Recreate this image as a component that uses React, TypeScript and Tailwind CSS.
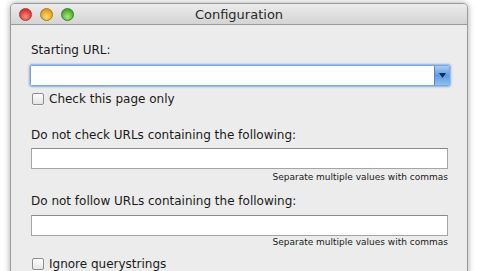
import React from "react";

function Checkbox({ label }: { label: string }) {
  return (
    <div className="flex items-center gap-[5px]">
      <div className="w-[12px] h-[12px] rounded-[2px] border border-[#8e8e8e] bg-gradient-to-b from-[#ffffff] to-[#e4e4e4] shadow-[0_1px_0_rgba(255,255,255,0.6)]" />
      <span className="text-[12px] text-[#1a1a1a] leading-none">{label}</span>
    </div>
  );
}

export default function App() {
  return (
    <div
      className="w-[480px] h-[271px] bg-white overflow-hidden pl-[10px] pr-[12px] pt-[3px]"
      style={{ fontFamily: '"Lucida Grande", "DejaVu Sans", "Liberation Sans", sans-serif' }}
    >
      <div className="h-[300px] rounded-t-[5px] border border-[#9a9a9a] bg-[#ececec] shadow-[0_0_6px_rgba(0,0,0,0.35)] overflow-hidden">
        <div className="relative h-[21px] flex items-center justify-center bg-gradient-to-b from-[#ececec] to-[#d4d4d4] border-b border-[#9a9a9a]">
          <div className="absolute left-[8px] top-[4px] flex gap-[8px]">
            <div className="w-[13px] h-[13px] rounded-full border border-[#9b3b3b] bg-[radial-gradient(circle_at_50%_70%,#ff8c86,#d8342d_70%)]" />
            <div className="w-[13px] h-[13px] rounded-full border border-[#a97a1f] bg-[radial-gradient(circle_at_50%_70%,#ffdd6e,#e19d1a_70%)]" />
            <div className="w-[13px] h-[13px] rounded-full border border-[#3c7d2a] bg-[radial-gradient(circle_at_50%_70%,#a6ec7d,#4aa72c_70%)]" />
          </div>
          <span className="text-[13px] text-[#2a2a2a] leading-none">Configuration</span>
        </div>
        <div className="pl-[19px] pr-[17px] pt-[19px] flex flex-col">
          <span className="text-[12px] text-[#1a1a1a] leading-none pl-[1px]">Starting URL:</span>
          <div className="mt-[9px] h-[21px] flex border border-[#7ea7d8] rounded-[2px] shadow-[0_0_2px_1px_rgba(110,160,220,0.8)]">
            <div className="flex-1 bg-white" />
            <div className="w-[15px] flex items-center justify-center bg-gradient-to-b from-[#a9cdf5] via-[#5c9ae4] to-[#8cc0f4] border-l border-[#5a86c0]">
              <svg width="7" height="5" viewBox="0 0 7 5">
                <path d="M0 0 L7 0 L3.5 5 Z" fill="#1a2a44" />
              </svg>
            </div>
          </div>
          <div className="mt-[7px] pl-[2px]">
            <Checkbox label="Check this page only" />
          </div>
          <span className="mt-[24px] text-[12px] text-[#1a1a1a] leading-none pl-[1px]">Do not check URLs containing the following:</span>
          <div className="mt-[7px] ml-[1px] mr-[2px] h-[21px] bg-white border border-[#a5a5a5] border-t-[#8a8a8a]" />
          <span className="mt-[4px] self-end text-[9px] text-[#1a1a1a] leading-none pr-[2px]">Separate multiple values with commas</span>
          <span className="mt-[13px] text-[12px] text-[#1a1a1a] leading-none pl-[1px]">Do not follow URLs containing the following:</span>
          <div className="mt-[8px] ml-[1px] mr-[2px] h-[21px] bg-white border border-[#a5a5a5] border-t-[#8a8a8a]" />
          <span className="mt-[2px] self-end text-[9px] text-[#1a1a1a] leading-none pr-[2px]">Separate multiple values with commas</span>
          <div className="mt-[11px] pl-[2px]">
            <Checkbox label="Ignore querystrings" />
          </div>
        </div>
      </div>
    </div>
  );
}
